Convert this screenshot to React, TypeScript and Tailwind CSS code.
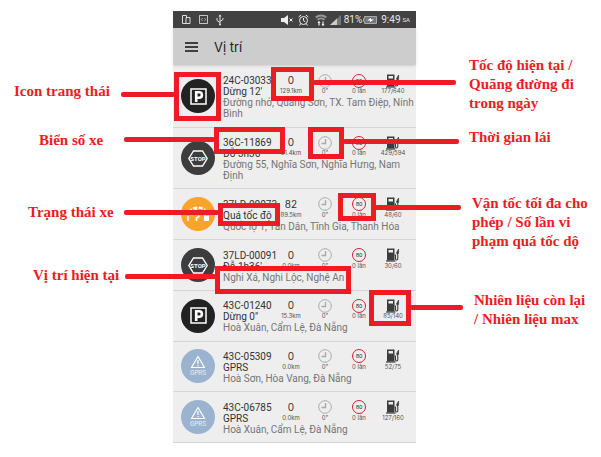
import React from "react";

type Status = "parked" | "stopped" | "speeding" | "gprs";

interface Vehicle {
  plate: string;
  status: Status;
  statusText: string;
  speed: number;
  distance: string;
  fuel: string;
  address: string;
}

const vehicles: Vehicle[] = [
  { plate: "24C-03033", status: "parked", statusText: "Dừng 12'", speed: 0, distance: "129.1km", fuel: "177/640", address: "Đường nhỏ, Quảng Sơn, TX. Tam Điệp, Ninh Bình" },
  { plate: "36C-11869", status: "stopped", statusText: "Đỗ 3h36'", speed: 0, distance: "91.4km", fuel: "429/594", address: "Đường 55, Nghĩa Sơn, Nghĩa Hưng, Nam Định" },
  { plate: "37LD-00073", status: "speeding", statusText: "Quá tốc độ", speed: 82, distance: "89.5km", fuel: "48/60", address: "Quốc lộ 1, Tân Dân, Tĩnh Gia, Thanh Hóa" },
  { plate: "37LD-00091", status: "stopped", statusText: "Đỗ 1h36'", speed: 0, distance: "0.0km", fuel: "30/60", address: "Nghi Xá, Nghi Lộc, Nghệ An" },
  { plate: "43C-01240", status: "parked", statusText: 'Dừng 0"', speed: 0, distance: "15.3km", fuel: "85/140", address: "Hoà Xuân, Cẩm Lệ, Đà Nẵng" },
  { plate: "43C-05309", status: "gprs", statusText: "GPRS", speed: 0, distance: "0.0km", fuel: "52/75", address: "Hoà Sơn, Hòa Vang, Đà Nẵng" },
  { plate: "43C-06785", status: "gprs", statusText: "GPRS", speed: 0, distance: "0.0km", fuel: "127/160", address: "Hoà Xuân, Cẩm Lệ, Đà Nẵng" },
];

function StatusIcon({ status }: { status: Status }) {
  if (status === "parked") {
    return (
      <span className="flex size-[34px] shrink-0 items-center justify-center rounded-full bg-[#222]">
        <svg viewBox="0 0 17 17" className="size-[17px]" fill="none" stroke="#fff">
          <rect x="1" y="1" width="15" height="15" strokeWidth="1.5" />
          <path d="M6.2 14V4.300h3a2.700 2.700 0 0 1 0 5.400H6.200" strokeWidth="2.600" />
        </svg>
      </span>
    );
  }
  if (status === "stopped") {
    return (
      <span className="relative flex size-[34px] shrink-0 items-center justify-center rounded-full bg-[#3d3d3d]">
        <svg viewBox="0 0 20 17" className="h-[17px] w-5" fill="none" stroke="#fff" strokeWidth="1.4">
          <path d="M5.500 1h9l4.700 7.500-4.700 7.500h-9L.8 8.500z" />
        </svg>
        <span className="absolute inset-0 flex items-center justify-center font-['Roboto',sans-serif] text-[6px] font-bold text-white">STOP</span>
      </span>
    );
  }
  if (status === "speeding") {
    return (
      <span className="flex size-[34px] shrink-0 items-center justify-center rounded-full bg-[#fba42b]">
        <svg viewBox="0 0 28 18" className="h-[18px] w-7" fill="none" stroke="#fff" strokeWidth="1.600">
          <path d="M5 7a10 8 0 0 1 16-2" strokeDasharray="4 1.500" strokeWidth="2.200" />
          <path d="M11 3l4 7" />
          <path d="M4 11v5M12.500 16v-3l3-2" />
          <rect x="20" y="11" width="5" height="5" fill="#fff" stroke="none" />
          <path d="M21 11V9.500h3V11" strokeWidth="1" />
        </svg>
      </span>
    );
  }
  return (
    <span className="flex size-[34px] shrink-0 flex-col items-center justify-center rounded-full bg-[#9cb3cf]">
      <svg viewBox="0 0 16 14" className="h-[14px] w-4" fill="none" stroke="#fff" strokeWidth="1.2" strokeLinejoin="round">
        <path d="M8 1.5L14.5 12.5h-13z" />
        <path d="M8 5v4M8 10v1.3" />
      </svg>
      <span className="font-['Inter','Noto_Sans',sans-serif] text-[6px] leading-[8px] text-white/80">GPRS</span>
    </span>
  );
}

function ClockIcon() {
  return (
    <svg viewBox="0 0 14 14" className="size-[14px]" fill="none" stroke="#aaa">
      <circle cx="7" cy="7" r="6.3" />
      <path d="M7.5 3v4.500h-4" strokeWidth="1.400" />
    </svg>
  );
}

function FuelIcon() {
  return (
    <svg viewBox="0 0 14 14" className="size-[14px]" fill="none" stroke="#3c3c3c">
      <path d="M1 .5h7.500v12H1z" fill="#3c3c3c" stroke="none" />
      <path d="M2.500 2h4.500v2.500H2.500z" fill="#eee" stroke="none" />
      <path d="M0 13h9.500" strokeWidth="1.2" />
      <path d="M8.500 7h1v3.700c0 1.700 2.300 1.700 2.300 0V7.200c0-1.300-1-1.500-1-3" strokeWidth="1.1" />
      <path d="M10.900 5.200c0-2 .8-2.500 1.700-4.200v4.500z" fill="#3c3c3c" strokeWidth=".7" />
    </svg>
  );
}

function Metric({ value, children }: { value: string; children: React.ReactNode }) {
  return (
    <div className="flex w-[34px] flex-col items-center">
      <div className="flex h-[13px] items-center justify-center">{children}</div>
      <span className="font-['Inter','Noto_Sans',sans-serif] text-[6px] leading-[7px] text-[#555]">{value}</span>
    </div>
  );
}

function VehicleRow({ v }: { v: Vehicle }) {
  return (
    <li className="flex flex-auto items-center gap-2 border-b border-[#d6d6d6] pl-2">
      <StatusIcon status={v.status} />
      <div className="min-w-0 flex-1 pt-[9px] pb-[7px] text-[10px] leading-[11px]">
        <div className="flex h-[22px] pr-1.5">
          <div className="min-w-0 flex-1 whitespace-nowrap text-[#333]">
            <p>{v.plate}</p>
            <p>{v.statusText}</p>
          </div>
          <div className="-mt-px flex shrink-0">
            <Metric value={v.distance}>
              <span className="font-['Inter','Noto_Sans',sans-serif] text-[#333]">{v.speed}</span>
            </Metric>
            <Metric value={'0"'}>
              <ClockIcon />
            </Metric>
            <Metric value="0 lần">
              <span className="flex size-[14px] items-center justify-center rounded-full border border-[#d9203a] text-[6px] leading-none text-[#333]">80</span>
            </Metric>
            <Metric value={v.fuel}>
              <FuelIcon />
            </Metric>
          </div>
        </div>
        <p className="text-[#757575]">{v.address}</p>
      </div>
    </li>
  );
}

function StatusBar() {
  return (
    <div className="flex h-[17px] items-center bg-[#424242] pr-1.5 pl-2 text-[10px] text-[#e6e6e6]">
      <div className="flex items-center gap-2">
        <svg viewBox="0 0 10 10" className="size-[10px]" fill="none" stroke="#ddd">
          <path d="M5 8.5H1.5v-8h4V2M5 2.5h4v6H5z" />
        </svg>
        <svg viewBox="0 0 10 10" className="size-[9px]" fill="none" stroke="#ddd">
          <path d="M.5.5h9v9h-9z" />
          <path d="M4 3.5L2.5 5 4 6.5M6 3.5L7.5 5 6 6.5" strokeWidth=".8" />
        </svg>
        <svg viewBox="0 0 8 12" className="h-3 w-2" fill="none" stroke="#ddd">
          <path d="M4 1v10M1 4v2.5L4 8.5M7 4v1.5L4 7.5" />
          <path d="M2.5 2.5L4 .5l1.5 2z" fill="#ddd" stroke="none" />
          <circle cx="4" cy="10.5" r="1" fill="#ddd" stroke="none" />
        </svg>
      </div>
      <div className="ml-auto flex items-center">
        <svg viewBox="0 0 12 10" className="mr-[5px] h-[10px] w-3" fill="#eee">
          <path d="M0 3h3l4-3v10L3 7H0z" />
          <path d="M8.5 3.5l3 3M11.5 3.5l-3 3" stroke="#eee" />
        </svg>
        <svg viewBox="0 0 11 12" className="mr-1.5 h-3 w-[11px]" fill="none" stroke="#eee">
          <circle cx="5.5" cy="6.5" r="4" />
          <path d="M5.5 4v2.7l1.8 1M.7 3l2.4-2M10.3 3L7.9 1M2.5 10l-1 1.5M8.5 10l1 1.5" />
        </svg>
        <svg viewBox="0 0 12 12" className="mr-[3px] size-3" fill="none" stroke="#999">
          <path d="M.8 3.500a7.500 7.500 0 0 1 10.400 0M2.600 5.800a5 5 0 0 1 6.800 0" strokeWidth="2" />
          <path d="M4 7.500v4M8 7.500v4" stroke="#eee" strokeWidth="1.200" />
          <path d="M2.500 9L4 7l1.500 2zM6.500 10L8 12l1.500-2z" fill="#eee" stroke="none" />
        </svg>
        <svg viewBox="0 0 11 10" className="mr-[3px] h-[10px] w-[11px]">
          <path d="M0 10L11 0v10z" fill="#777" />
          <path d="M0 10l7-6.4V10z" fill="#ccc" />
        </svg>
        <span>81%</span>
        <svg viewBox="0 0 14 8" className="mr-1 ml-px h-2 w-[14px]">
          <path d="M1.5.5h12v7h-12V5.500H.5v-3h1z" fill="#777" stroke="#aaa" />
          <path d="M4 4.500l4-2.500v1.500h3L7 6V4.500z" fill="#fff" />
        </svg>
        <span>9:49</span>
        <span className="ml-0.5 text-[6px]">SA</span>
      </div>
    </div>
  );
}

function Label({ className, children }: { className?: string; children: React.ReactNode }) {
  return <p className={className}>{children}</p>;
}

/* Frames and leader lines, placed over the phone screen they point at. */
const frames = [
  "left-[1px] top-[61px] h-[49px] w-[47px]",
  "left-[98px] top-[56px] h-[34px] w-[43px]",
  "left-[41px] top-[116px] h-[27px] w-[71px]",
  "left-[135px] top-[116px] h-[32px] w-[36px]",
  "left-[45px] top-[192px] h-[23px] w-[62px]",
  "left-[165px] top-[182px] h-[28px] w-[38px]",
  "left-[42px] top-[255px] h-[28px] w-[136px]",
  "left-[196px] top-[279px] h-[36px] w-[42px]",
];

const leaders = [
  "left-[-52px] top-[81px] w-[54px]",
  "left-[140px] top-[69px] w-[143px]",
  "left-[-49px] top-[126px] w-[91px]",
  "left-[170px] top-[128px] w-[116px]",
  "left-[-49px] top-[199px] w-[95px]",
  "left-[202px] top-[194px] w-[86px]",
  "left-[-48px] top-[263px] w-[91px]",
  "left-[237px] top-[294px] w-[53px]",
];

export default function App() {
  return (
    <main className="grid min-h-screen grid-cols-[173fr_243px_185fr] items-start bg-white pb-3">
      <section className="flex flex-col items-start pt-[82px] font-['Liberation_Serif',serif] text-[15px] leading-[19px] font-bold whitespace-nowrap text-[#ed1c24]">
        <Label className="ml-[14px]">Icon trang thái</Label>
        <Label className="mt-[30px] ml-[39px]">Biển số xe</Label>
        <Label className="mt-[53px] ml-[28px]">Trạng thái xe</Label>
        <Label className="mt-[44px] ml-[33px]">Vị trí hiện tại</Label>
      </section>

      <section className="relative mt-[11px] bg-[#eee] font-['Roboto','Noto_Sans',sans-serif]">
        <StatusBar />
        <header className="flex h-[37px] items-center gap-4 bg-[#cdcdcd] pl-3 shadow-sm">
          <button type="button" aria-label="Menu" className="flex w-[13px] flex-col gap-[2px]">
            <span className="h-[2px] w-full bg-[#3f3f3f]" />
            <span className="h-[2px] w-full bg-[#3f3f3f]" />
            <span className="h-[2px] w-full bg-[#3f3f3f]" />
          </button>
          <h1 className="font-['Inter','Noto_Sans',sans-serif] text-[13px] leading-4 text-[#222]">Vị trí</h1>
        </header>
        <ul className="flex min-h-[378px] flex-col pt-px">
          {vehicles.map((v) => (
            <VehicleRow key={v.plate} v={v} />
          ))}
        </ul>
        {frames.map((c) => (
          <span key={c} aria-hidden="true" className={`absolute border-5 border-[#ed1c24] ${c}`} />
        ))}
        {leaders.map((c) => (
          <span key={c} aria-hidden="true" className={`absolute h-[5px] rounded-xs bg-[#ed1c24] ${c}`} />
        ))}
      </section>

      <section className="flex flex-col items-start pt-[56px] pl-[53px] font-['Liberation_Serif',serif] text-[15px] leading-[19px] font-bold whitespace-nowrap text-[#ed1c24]">
        <Label>
          Tốc độ hiện tại /<br />Quãng đường đi<br />trong ngày
        </Label>
        <Label className="mt-[15px]">Thời gian lái</Label>
        <Label className="mt-[47px] ml-[3px]">
          Vận tốc tối đa cho<br />phép / Số lần vi<br />phạm quá tốc dộ
        </Label>
        <Label className="mt-[40px] ml-[5px]">
          Nhiên liệu còn lại<br />/ Nhiên liệu max
        </Label>
      </section>
    </main>
  );
}
